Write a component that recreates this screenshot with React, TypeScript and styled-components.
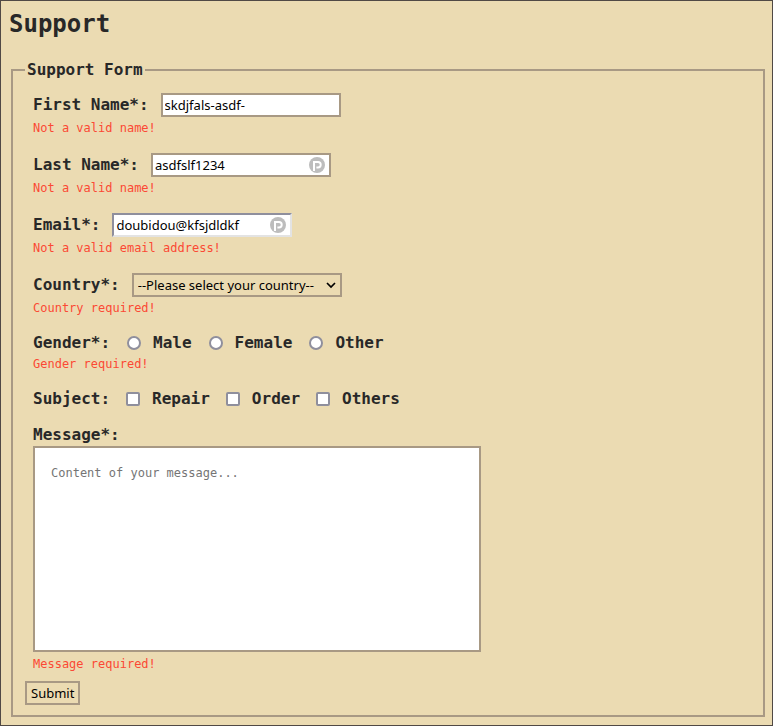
import React from "react";
import styled, { createGlobalStyle, css } from "styled-components";

const GlobalStyle = createGlobalStyle`
  *, *::before, *::after { box-sizing: border-box; }
  html, body, #root { min-height: 100vh; }
  body { margin: 0; background: #ebdbb2; }
  #root { display: flex; }
`;

const mono = `"DejaVu Sans Mono", monospace`;
const sans = `"Noto Sans", sans-serif`;
const line = "2px solid #a89984";

const Page = styled.main`
  flex: 1;
  min-width: 0;
  padding: 8px 7px 8px 8px;
  border: 1px solid #504945;
  background: #ebdbb2;
  color: #282828;
  font: bold 16px/20px ${mono};
`;

const Title = styled.h1`
  margin: 0;
  font-size: 24px;
  line-height: 30px;
`;

const Fieldset = styled.fieldset`
  min-width: 0;
  margin: 21px 0 0 2px;
  padding: 13px 12px 10px;
  border: ${line};
`;

const Legend = styled.legend`
  padding: 0 2px;
`;

const Fields = styled.div`
  display: flex;
  flex-direction: column;
  gap: 17px;
  padding: 0 8px;
`;

const Field = styled.div`
  display: flex;
  flex-direction: column;
  gap: 3px;
`;

const Row = styled.div`
  display: flex;
  align-items: center;
  gap: 12px;
`;

const ErrorText = styled.p`
  margin: 0;
  color: #fb4934;
  font-size: 12px;
  font-weight: normal;
  line-height: 16px;
`;

const Control = styled.span`
  position: relative;
  display: flex;
`;

const controlStyle = css`
  height: 24px;
  border: ${line};
  border-radius: 0;
  color: #000;
  font: 13px/18px ${sans};
`;

const TextInput = styled.input<{ $inset?: boolean }>`
  ${controlStyle}
  width: 180px;
  padding: 1px 2px;
  background: #fff;
  ${(p) =>
    p.$inset &&
    css`
      border-color: #8f8f9d #e3e3e3 #e3e3e3 #8f8f9d;
    `}
`;

const Select = styled.select`
  ${controlStyle}
  appearance: none;
  width: 210px;
  padding: 0 4px;
  background: #ebdbb2;
`;

const BadgeSvg = styled.svg`
  position: absolute;
  top: 4px;
  right: 6px;
  width: 16px;
  height: 16px;
`;

const ArrowSvg = styled.svg`
  position: absolute;
  top: 8px;
  right: 6px;
  width: 10px;
  height: 8px;
  pointer-events: none;
`;

const Group = styled.div`
  display: flex;
  flex-wrap: wrap;
  gap: 16px;
`;

const Choice = styled.label`
  display: flex;
  align-items: center;
  gap: 12px;
`;

const ChoiceInput = styled.input`
  appearance: none;
  width: 14px;
  height: 14px;
  margin: 0;
  border: 2px solid #8f8f9d;
  border-radius: ${(p) => (p.type === "radio" ? "50%" : "2px")};
  background: #fff;
  &:checked {
    background: #0060df;
  }
`;

const RadioGroup = styled(Group)`
  gap: 17px;
`;

const MessageField = styled.div`
  display: flex;
  flex-direction: column;
  align-items: flex-start;
`;

const MessageLabel = styled.label`
  margin-bottom: 2px;
  line-height: 18px;
`;

const Message = styled.textarea`
  width: 448px;
  max-width: 100%;
  height: 206px;
  margin-bottom: 4px;
  padding: 17px 16px;
  border: ${line};
  background: #fff;
  font: 12px/16px ${mono};
  resize: none;
  &::placeholder {
    color: #757575;
  }
`;

const Submit = styled.button`
  ${controlStyle}
  display: block;
  margin-top: 9px;
  padding: 0 4px;
  background: transparent;
`;

const Badge = () => (
  <BadgeSvg viewBox="0 0 16 16" aria-hidden="true">
    <circle cx="8" cy="8" r="8" fill="#bdbdbd" />
    <path d="M5 5V14" fill="none" stroke="#fff" strokeWidth="2" />
    <path d="M4 4H9a3.6 3.6 0 0 1 0 7.4H7.4V9.4H9a1.7 1.7 0 0 0 0-3.5H4Z" fill="#fff" />
  </BadgeSvg>
);

type TextFieldProps = {
  id: string;
  label: string;
  value: string;
  error: string;
  badge?: boolean;
  inset?: boolean;
};

const TextField = ({ id, label, value, error, badge, inset }: TextFieldProps) => (
  <Field>
    <Row>
      <label htmlFor={id}>{label}</label>
      <Control>
        <TextInput id={id} type="text" defaultValue={value} $inset={inset} aria-describedby={`${id}-error`} />
        {badge && <Badge />}
      </Control>
    </Row>
    <ErrorText id={`${id}-error`}>{error}</ErrorText>
  </Field>
);

type ChoicesProps = { type: "radio" | "checkbox"; name: string; label: string; options: string[] };

const Choices = ({ type, name, label, options }: ChoicesProps) => {
  const Wrapper = type === "radio" ? RadioGroup : Group;
  return (
    <Wrapper role="group" aria-labelledby={`${name}-label`}>
      <span id={`${name}-label`}>{label}</span>
      {options.map((option) => (
        <Choice key={option}>
          <ChoiceInput type={type} name={name} value={option} />
          {option}
        </Choice>
      ))}
    </Wrapper>
  );
};

export default function App() {
  return (
    <>
      <GlobalStyle />
      <Page>
        <Title>Support</Title>
        <form noValidate onSubmit={(e) => e.preventDefault()}>
          <Fieldset>
            <Legend>Support Form</Legend>
            <Fields>
              <TextField id="first-name" label="First Name*:" value="skdjfals-asdf-" error="Not a valid name!" />
              <TextField id="last-name" label="Last Name*:" value="asdfslf1234" error="Not a valid name!" badge />
              <TextField id="email" label="Email*:" value="doubidou@kfsjdldkf" error="Not a valid email address!" badge inset />
              <Field>
                <Row>
                  <label htmlFor="country">Country*:</label>
                  <Control>
                    <Select id="country">
                      <option>--Please select your country--</option>
                    </Select>
                    <ArrowSvg viewBox="0 0 10 8" aria-hidden="true">
                      <path d="M1 2L5 6 9 2" fill="none" stroke="#000" strokeWidth="1.7" />
                    </ArrowSvg>
                  </Control>
                </Row>
                <ErrorText>Country required!</ErrorText>
              </Field>
              <Field>
                <Choices type="radio" name="gender" label="Gender*:" options={["Male", "Female", "Other"]} />
                <ErrorText>Gender required!</ErrorText>
              </Field>
              <Choices type="checkbox" name="subject" label="Subject:" options={["Repair", "Order", "Others"]} />
              <MessageField>
                <MessageLabel htmlFor="message">Message*:</MessageLabel>
                <Message id="message" placeholder="Content of your message..." />
                <ErrorText>Message required!</ErrorText>
              </MessageField>
            </Fields>
            <Submit type="submit">Submit</Submit>
          </Fieldset>
        </form>
      </Page>
    </>
  );
}
